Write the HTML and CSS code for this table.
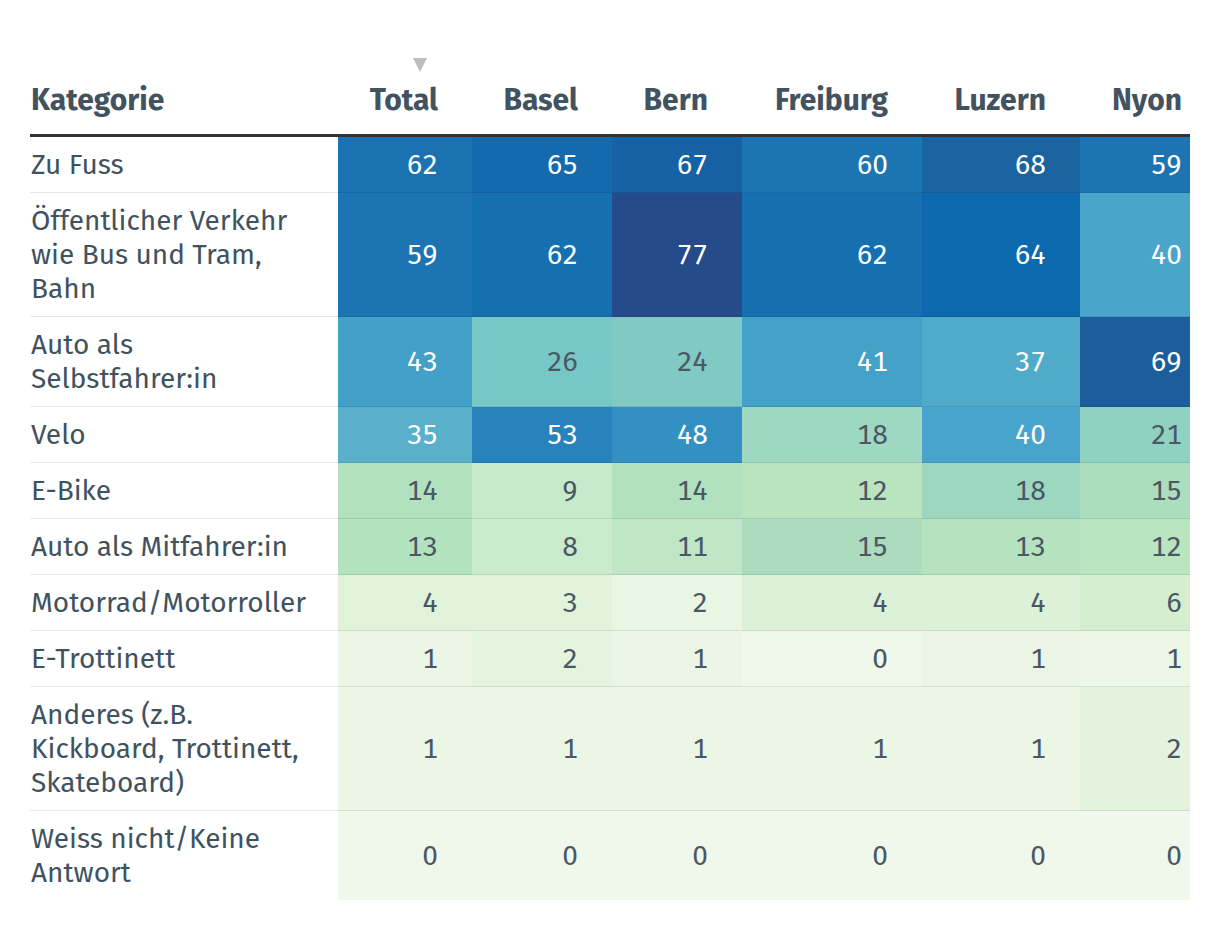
FILE: index.html
```html
<!DOCTYPE html>
<html lang="de">
<head>
<meta charset="utf-8">
<title>Verkehrsmittel</title>
<link rel="stylesheet" href="styles.css">
</head>
<body>
<div class="wrap">
<table class="heat">
  <colgroup>
    <col class="c-cat"><col class="c-total"><col class="c-basel"><col class="c-bern"><col class="c-frei"><col class="c-luz"><col class="c-nyon">
  </colgroup>
  <thead>
    <tr>
      <th class="cat">Kategorie</th>
      <th class="num sorted"><span class="sort-arrow"></span>Total</th>
      <th class="num">Basel</th>
      <th class="num">Bern</th>
      <th class="num">Freiburg</th>
      <th class="num">Luzern</th>
      <th class="num last">Nyon</th>
    </tr>
  </thead>
  <tbody>
    <tr>
      <td class="cat">Zu Fuss</td>
      <td class="num light" style="background:#1a72b0">62</td>
      <td class="num light" style="background:#1569ad">65</td>
      <td class="num light" style="background:#1762a5">67</td>
      <td class="num light" style="background:#1c75b3">60</td>
      <td class="num light" style="background:#1b62a0">68</td>
      <td class="num light last" style="background:#1c74b2">59</td>
    </tr>
    <tr>
      <td class="cat">Öffentlicher Verkehr wie Bus und Tram, Bahn</td>
      <td class="num light" style="background:#1c75b2">59</td>
      <td class="num light" style="background:#1570b0">62</td>
      <td class="num light" style="background:#264b8b">77</td>
      <td class="num light" style="background:#1670b0">62</td>
      <td class="num light" style="background:#0d69ae">64</td>
      <td class="num light last" style="background:#4aa5cb">40</td>
    </tr>
    <tr>
      <td class="cat">Auto als Selbstfahrer:in</td>
      <td class="num light" style="background:#43a0c8">43</td>
      <td class="num" style="background:#77c7c6">26</td>
      <td class="num" style="background:#80cac3">24</td>
      <td class="num light" style="background:#44a1c8">41</td>
      <td class="num light" style="background:#50abca">37</td>
      <td class="num light last" style="background:#1c5d9c">69</td>
    </tr>
    <tr>
      <td class="cat">Velo</td>
      <td class="num light" style="background:#5ab0ca">35</td>
      <td class="num light" style="background:#2883bc">53</td>
      <td class="num light" style="background:#3390c2">48</td>
      <td class="num" style="background:#9fd8c0">18</td>
      <td class="num light" style="background:#48a4cc">40</td>
      <td class="num last" style="background:#8fd2c1">21</td>
    </tr>
    <tr>
      <td class="cat">E-Bike</td>
      <td class="num" style="background:#b1e1be">14</td>
      <td class="num" style="background:#c6eacb">9</td>
      <td class="num" style="background:#b1e1be">14</td>
      <td class="num" style="background:#b9e4be">12</td>
      <td class="num" style="background:#9cd8c0">18</td>
      <td class="num last" style="background:#acdebd">15</td>
    </tr>
    <tr>
      <td class="cat">Auto als Mitfahrer:in</td>
      <td class="num" style="background:#b3e2be">13</td>
      <td class="num" style="background:#cbebcd">8</td>
      <td class="num" style="background:#bfe6c6">11</td>
      <td class="num" style="background:#acdcbd">15</td>
      <td class="num" style="background:#b5e3bf">13</td>
      <td class="num last" style="background:#b9e5c0">12</td>
    </tr>
    <tr>
      <td class="cat">Motorrad/Motorroller</td>
      <td class="num" style="background:#e1f2da">4</td>
      <td class="num" style="background:#e2f3dc">3</td>
      <td class="num" style="background:#e8f6e3">2</td>
      <td class="num" style="background:#ddf0d8">4</td>
      <td class="num" style="background:#ddf0d8">4</td>
      <td class="num last" style="background:#d6eed0">6</td>
    </tr>
    <tr>
      <td class="cat">E-Trottinett</td>
      <td class="num" style="background:#ebf6e4">1</td>
      <td class="num" style="background:#e5f4df">2</td>
      <td class="num" style="background:#ebf6e4">1</td>
      <td class="num" style="background:#eff8ea">0</td>
      <td class="num" style="background:#eaf5e3">1</td>
      <td class="num last" style="background:#ecf7e6">1</td>
    </tr>
    <tr>
      <td class="cat">Anderes (z.B. Kickboard, Trottinett, Skateboard)</td>
      <td class="num" style="background:#ebf6e4">1</td>
      <td class="num" style="background:#ebf6e4">1</td>
      <td class="num" style="background:#ebf6e4">1</td>
      <td class="num" style="background:#ebf6e4">1</td>
      <td class="num" style="background:#ebf6e4">1</td>
      <td class="num last" style="background:#e4f3de">2</td>
    </tr>
    <tr class="final">
      <td class="cat">Weiss nicht/Keine Antwort</td>
      <td class="num" style="background:#eff8ea">0</td>
      <td class="num" style="background:#eff8ea">0</td>
      <td class="num" style="background:#eff8ea">0</td>
      <td class="num" style="background:#eff8ea">0</td>
      <td class="num" style="background:#eff8ea">0</td>
      <td class="num last" style="background:#eff8ea">0</td>
    </tr>
  </tbody>
</table>
</div>
</body>
</html>
```
FILE: styles.css
```css
html, body {
  margin: 0;
  padding: 0;
  background: #ffffff;
}

.wrap {
  padding: 50px 30px 0 30px;
}

.heat {
  width: 1160px;
  table-layout: fixed;
  border-collapse: collapse;
  border-spacing: 0;
  font-family: "Fira Sans", "Open Sans", "Noto Sans", sans-serif;
  font-size: 28px;
  line-height: 34px;
  color: #43525f;
}

.c-cat { width: 308px; }
.c-total { width: 134px; }
.c-basel { width: 140px; }
.c-bern { width: 130px; }
.c-frei { width: 180px; }
.c-luz { width: 158px; }
.c-nyon { width: 110px; }

.heat th {
  font-size: 30px;
  font-weight: 700;
  padding: 33px 34px 17px 0;
  border-bottom: 3px solid #333333;
  vertical-align: bottom;
  color: #43525f;
  white-space: nowrap;
}

.heat th.cat {
  text-align: left;
  padding-left: 1px;
}

.heat th.num {
  text-align: right;
}

.heat th.sorted {
  position: relative;
}

.sort-arrow {
  position: absolute;
  top: 8px;
  right: 45px;
  width: 0;
  height: 0;
  border-left: 7px solid transparent;
  border-right: 7px solid transparent;
  border-top: 14px solid #bdbdbd;
}

.heat .last {
  padding-right: 8px;
}

.heat td {
  padding: 11px 34px 10px 0;
  border-bottom: 1px solid rgba(0, 0, 0, 0.09);
  vertical-align: middle;
}

.heat td.cat {
  padding-left: 1px;
  padding-right: 26px;
  text-align: left;
  color: #3f5260;
}

.heat td.num {
  text-align: right;
  color: #4a5864;
  font-variant-numeric: tabular-nums;
}

.heat td.num.light {
  color: #ffffff;
}

.heat td.last {
  padding-right: 8px;
}

.heat tr.final td {
  border-bottom: none;
}
```
